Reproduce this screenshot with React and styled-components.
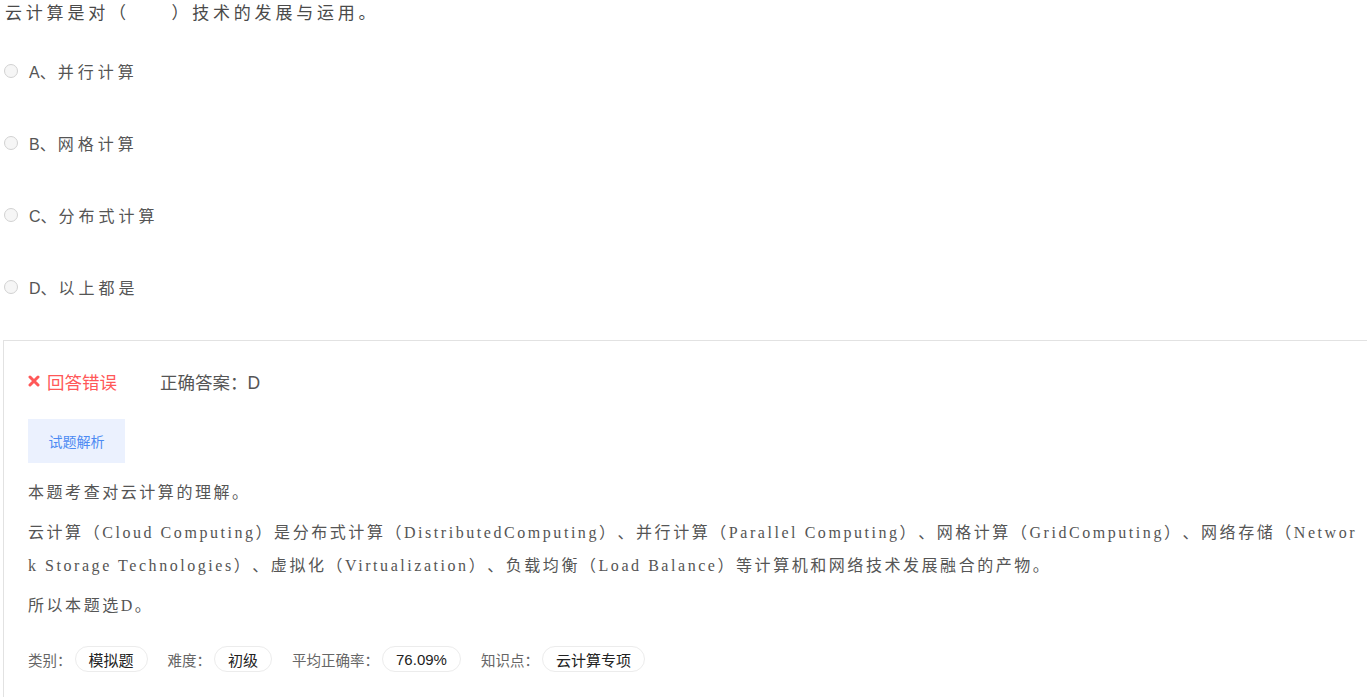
import styled, { createGlobalStyle } from 'styled-components';

const GlobalStyle = createGlobalStyle`
	html, body {
		margin: 0;
		padding: 0;
		background: #fff;
	}
	body {
		font-family: "Liberation Sans", "Noto Sans CJK SC", sans-serif;
		color: #555;
		text-spacing-trim: space-all;
	}
`;

const options = [
	{ key: 'A', text: '并行计算' },
	{ key: 'B', text: '网格计算' },
	{ key: 'C', text: '分布式计算' },
	{ key: 'D', text: '以上都是' },
];

const tags = [
	{ label: '类别：', value: '模拟题' },
	{ label: '难度：', value: '初级' },
	{ label: '平均正确率：', value: '76.09%' },
	{ label: '知识点：', value: '云计算专项' },
];

function App() {
	return (
		<Page>
			<GlobalStyle />
			<Question>云计算是对（　　）技术的发展与运用。</Question>
			<OptionList>
				{options.map((o) => (
					<Option key={o.key}>
						<Radio />
						<OptionKey>{o.key}、</OptionKey>
						<OptionText>{o.text}</OptionText>
					</Option>
				))}
			</OptionList>
			<Panel>
				<ResultRow>
					<Wrong>
						<CrossIcon viewBox="0 0 12 12">
							<path d="M2 2 L10 10 M10 2 L2 10" />
						</CrossIcon>
						回答错误
					</Wrong>
					<Answer>正确答案：D</Answer>
				</ResultRow>
				<AnalysisButton>试题解析</AnalysisButton>
				<Analysis>
					<p>本题考查对云计算的理解。</p>
					<p>
						云计算（Cloud Computing）是分布式计算（DistributedComputing）、并行计算（Parallel Computing）、网格计算（GridComputing）、网络存储（Network Storage Technologies）、虚拟化（Virtualization）、负载均衡（Load Balance）等计算机和网络技术发展融合的产物。
					</p>
					<p>所以本题选D。</p>
				</Analysis>
				<TagRow>
					{tags.map((t) => (
						<Tag key={t.label}>
							<TagLabel>{t.label}</TagLabel>
							<Pill>{t.value}</Pill>
						</Tag>
					))}
				</TagRow>
			</Panel>
		</Page>
	);
}

export default App;

const Page = styled.div`
	padding-left: 4px;
	display: flex;
	flex-direction: column;
`;
const Question = styled.div`
	height: 28px;
	line-height: 28px;
	padding-left: 1px;
	font-size: 17px;
	letter-spacing: 3.8px;
	color: #4a4a4a;
`;
const OptionList = styled.div`
	margin-top: 7px;
	display: flex;
	flex-direction: column;
`;
const Option = styled.label`
	height: 72px;
	display: flex;
	align-items: center;
`;
const Radio = styled.span`
	width: 12px;
	height: 12px;
	border: 1px solid #d2d2d2;
	border-radius: 50%;
	background: #f6f6f6;
	margin-right: 11px;
	flex-shrink: 0;
`;
const OptionKey = styled.span`
	font-size: 16px;
	color: #555;
	margin-right: 2px;
`;
const OptionText = styled.span`
	font-size: 16px;
	letter-spacing: 4px;
	color: #555;
`;
const Panel = styled.div`
	margin-top: 17px;
	margin-left: -1px;
	border: 1px solid #e2e2e2;
	border-right: none;
	padding: 27px 6px 36px 24px;
	display: flex;
	flex-direction: column;
	align-items: flex-start;
`;
const ResultRow = styled.div`
	display: flex;
	align-items: center;
	gap: 43px;
	height: 26px;
	font-size: 17.5px;
`;
const Wrong = styled.span`
	color: #ff5858;
	display: flex;
	align-items: center;
	gap: 7px;
`;
const CrossIcon = styled.svg`
	width: 12px;
	height: 12px;
	stroke: #ff5858;
	stroke-width: 3;
	stroke-linecap: round;
	fill: none;
`;
const Answer = styled.span`
	color: #555;
`;
const AnalysisButton = styled.div`
	margin-top: 25px;
	width: 97px;
	height: 44px;
	display: flex;
	align-items: center;
	justify-content: center;
	background: #ebf1fe;
	color: #4b8af3;
	font-size: 14px;
`;
const Analysis = styled.div`
	margin-top: 13px;
	font-family: "Liberation Serif", "Noto Sans CJK SC", serif;
	font-size: 16px;
	letter-spacing: 2.55px;
	color: #555;
	word-break: break-all;
	p {
		margin: 0 0 7px;
		line-height: 33px;
	}
`;
const TagRow = styled.div`
	margin-top: 17px;
	display: flex;
	align-items: center;
	gap: 20px;
`;
const Tag = styled.div`
	display: flex;
	align-items: center;
	gap: 3px;
`;
const TagLabel = styled.span`
	font-size: 14.5px;
	color: #666;
`;
const Pill = styled.span`
	height: 24px;
	padding: 0 13px;
	border: 1px solid #ececec;
	border-radius: 13px;
	display: flex;
	align-items: center;
	font-size: 15px;
	color: #222;
`;
